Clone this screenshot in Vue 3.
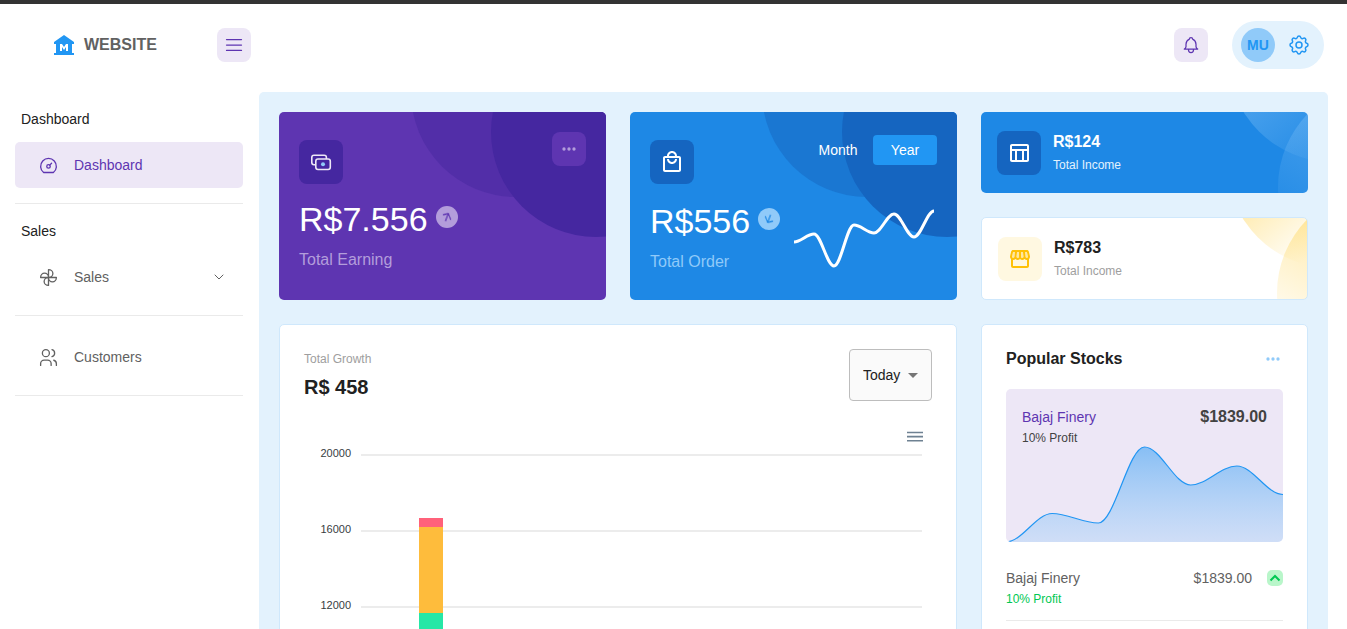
<script setup>
import { ref } from 'vue'

const period = ref('Year')
const range = ref('Today')

// Smooth line through the points with horizontal tangents at each one.
function smooth(points) {
  return points.reduce((d, [x, y], i) => {
    if (i === 0) return `M${x} ${y}`
    const [px, py] = points[i - 1]
    const k = (x - px) * 0.35
    return `${d} C${px + k} ${py} ${x - k} ${y} ${x} ${y}`
  }, '')
}

const orderLine = smooth([33, 25, 57, 16, 24, 5, 28, 2].map((y, i) => [i * 20, y]))
const stockLine = smooth([0, 15, 10, 50, 30, 40, 25].map((v, i) => [i * 46, 96 - v * 1.9]))
const stockArea = `${stockLine} V96 H0 Z`

const ticks = ['20000', '16000', '12000']
const segments = [
  { color: '#ff617a', height: 9 },
  { color: '#febc3c', height: 86 },
  { color: '#26e7a6', height: 220 },
]
</script>

<template>
  <div class="shell">
    <header class="topbar">
      <div class="brand-area">
        <a class="brand" href="#">
          <svg width="24" height="24" viewBox="0 0 24 24" fill="#2196f3" aria-hidden="true">
            <path d="M22 11V9L12 2 2 9v2h2v9H2v2h20v-2h-2v-9h2zm-6 7h-2v-4l-2 3-2-3v4H8v-7h2l2 3 2-3h2v7z" />
          </svg>
          <span>WEBSITE</span>
        </a>
        <button class="icon-btn" aria-label="Toggle menu">
          <svg class="line" width="20" height="20" viewBox="0 0 24 24"><path d="M3 5.500h18M3 12h18M3 18.500h18" /></svg>
        </button>
      </div>
      <div class="tools">
        <button class="icon-btn" aria-label="Notifications">
          <svg class="line" width="20" height="20" viewBox="0 0 24 24">
            <path d="M10 5a2 2 0 0 1 4 0a7 7 0 0 1 4 6v3a4 4 0 0 0 2 3h-16a4 4 0 0 0 2-3v-3a7 7 0 0 1 4-6M9 17v1a3 3 0 0 0 6 0v-1" />
          </svg>
        </button>
        <button class="profile" aria-label="Account settings">
          <span class="avatar">MU</span>
          <svg class="line" width="24" height="24" viewBox="0 0 24 24">
            <path d="M10.325 4.317c.426-1.756 2.924-1.756 3.35 0a1.724 1.724 0 0 0 2.573 1.066c1.543-.94 3.31.826 2.37 2.37a1.724 1.724 0 0 0 1.065 2.572c1.756.426 1.756 2.924 0 3.35a1.724 1.724 0 0 0-1.066 2.573c.94 1.543-.826 3.31-2.37 2.37a1.724 1.724 0 0 0-2.572 1.065c-.426 1.756-2.924 1.756-3.35 0a1.724 1.724 0 0 0-2.573-1.066c-1.543.94-3.31-.826-2.37-2.37a1.724 1.724 0 0 0-1.065-2.572c-1.756-.426-1.756-2.924 0-3.35a1.724 1.724 0 0 0 1.066-2.573c-.94-1.543.826-3.31 2.37-2.37c1 .608 2.296.07 2.572-1.065z" />
            <circle cx="12" cy="12" r="3" />
          </svg>
        </button>
      </div>
    </header>

    <div class="body">
      <nav class="sidebar">
        <section class="group">
          <h2 class="caption">Dashboard</h2>
          <a class="item active" href="#">
            <svg class="line" width="21" height="21" viewBox="0 0 24 24">
              <circle cx="12" cy="13" r="2" /><path d="M13.450 11.550 15.500 9.500M6.400 20a9 9 0 1 1 11.200 0z" />
            </svg>
            <span>Dashboard</span>
          </a>
        </section>
        <section class="group">
          <h2 class="caption">Sales</h2>
          <a class="item" href="#">
            <svg class="line" width="21" height="21" viewBox="0 0 24 24">
              <path d="M12 12c2.760 0 5-2.010 5-4.500S14.760 3 12 3v9zM12 12c0 2.760 2.010 5 4.500 5s4.500-2.240 4.500-5h-9zM12 12c-2.760 0-5 2.010-5 4.500S9.240 21 12 21v-9zM12 12c0-2.760-2.010-5-4.500-5S3 9.240 3 12h9z" />
            </svg>
            <span>Sales</span>
            <svg class="line chevron" width="16" height="16" viewBox="0 0 24 24"><path d="M6 9l6 6l6-6" /></svg>
          </a>
        </section>
        <section class="group untitled">
          <a class="item" href="#">
            <svg class="line" width="21" height="21" viewBox="0 0 24 24">
              <circle cx="9" cy="7" r="4" />
              <path d="M3 21v-2a4 4 0 0 1 4-4h4a4 4 0 0 1 4 4v2M16 3.130a4 4 0 0 1 0 7.750M21 21v-2a4 4 0 0 0-3-3.850" />
            </svg>
            <span>Customers</span>
          </a>
        </section>
      </nav>

      <main class="board">
        <article class="card stat purple">
          <div class="stat-top">
            <span class="tile">
              <svg width="22" height="22" viewBox="0 0 22 22" fill="none" stroke="#ede7f6" stroke-width="1.600" stroke-linejoin="round">
                <path d="M5 13.800H4a2.200 2.200 0 0 1-2.200-2.200V6.500a2.200 2.200 0 0 1 2.200-2.200h10.200a2.200 2.200 0 0 1 2.200 2.200V8" />
                <rect x="5.800" y="8" width="14.500" height="10.500" rx="2.200" />
                <circle cx="13" cy="13.200" r="2" fill="#90caf9" stroke="none" />
              </svg>
            </span>
            <button class="icon-btn more" aria-label="More options">
              <svg width="20" height="20" viewBox="0 0 24 24" fill="currentColor"><circle cx="6" cy="12" r="2" /><circle cx="12" cy="12" r="2" /><circle cx="18" cy="12" r="2" /></svg>
            </button>
          </div>
          <div class="amount">
            <strong>R$7.556</strong>
            <span class="trend">
              <svg width="16" height="16" viewBox="0 0 24 24" fill="currentColor"><path d="M4 12l1.410 1.410L11 7.830V20h2V7.830l5.580 5.590L20 12l-8-8-8 8z" /></svg>
            </span>
          </div>
          <p class="label">Total Earning</p>
        </article>

        <article class="card stat blue">
          <div class="stat-top">
            <span class="tile">
              <svg width="24" height="24" viewBox="0 0 24 24" fill="#fff">
                <path d="M19 6h-2c0-2.760-2.240-5-5-5S7 3.240 7 6H5c-1.100 0-1.990.9-1.990 2L3 20c0 1.100.9 2 2 2h14c1.100 0 2-.9 2-2V8c0-1.100-.9-2-2-2zm-7-3c1.660 0 3 1.340 3 3H9c0-1.660 1.340-3 3-3zm7 17H5V8h14v12zm-7-8c-1.660 0-3-1.340-3-3H7c0 2.760 2.240 5 5 5s5-2.240 5-5h-2c0 1.660-1.340 3-3 3z" />
              </svg>
            </span>
            <div class="switch">
              <button v-for="p in ['Month', 'Year']" :key="p" :class="{ on: period === p }" @click="period = p">{{ p }}</button>
            </div>
          </div>
          <div class="order-row">
            <div>
              <div class="amount">
                <strong>R$556</strong>
                <span class="trend">
                  <svg width="16" height="16" viewBox="0 0 24 24" fill="currentColor"><path d="M20 12l-1.410-1.410L13 16.170V4h-2v12.170l-5.580-5.590L4 12l8 8 8-8z" /></svg>
                </span>
              </div>
              <p class="label">Total Order</p>
            </div>
            <svg class="spark" width="140" height="60" viewBox="0 0 140 60"><path :d="orderLine" /></svg>
          </div>
        </article>

        <div class="stack">
          <article class="card income dark">
            <span class="tile">
              <svg width="24" height="24" viewBox="0 0 24 24" fill="#fff">
                <path d="M20 3H5c-1.100 0-2 .9-2 2v14c0 1.100.9 2 2 2h15c1.100 0 2-.9 2-2V5c0-1.100-.9-2-2-2zm0 2v3H5V5h15zm-5 14h-5v-9h5v9zM5 10h3v9H5v-9zm12 9v-9h3v9h-3z" />
              </svg>
            </span>
            <div><h3>R$124</h3><p>Total Income</p></div>
          </article>
          <article class="card income light">
            <span class="tile">
              <svg width="24" height="24" viewBox="0 0 24 24" fill="#ffc107">
                <path opacity=".3" d="M4.040 9.360c-.1.420-.01.850.26 1.170.13.180.44.470.93.470.61 0 1.130-.49 1.210-1.140L7.020 5H5.050zM8.490 9.520c-.04.39.08.78.33 1.070.24.260.55.410.89.410.74 0 1.290-.59 1.290-1.310V5H9.040zM13 5v4.690c0 .72.55 1.310 1.220 1.310.41 0 .73-.15.95-.41.26-.29.38-.68.33-1.070L14.960 5zM18.910 4.990L16.980 5l.58 4.860c.07.650.6 1.140 1.210 1.140.5 0 .8-.29.94-.47.26-.33.35-.75.25-1.170z" />
                <path d="M21.9 8.890l-1.050-4.370c-.22-.9-1-1.520-1.910-1.520H5.050c-.9 0-1.690.63-1.900 1.520L2.100 8.890c-.24 1.020-.02 2.060.62 2.880.08.110.19.190.28.290V19c0 1.100.9 2 2 2h14c1.100 0 2-.9 2-2v-6.940c.09-.09.2-.18.28-.28.64-.82.87-1.870.62-2.890zm-2.990-3.900l1.050 4.370c.1.420.01.840-.25 1.170-.14.180-.44.470-.94.470-.61 0-1.140-.49-1.210-1.140L16.980 5l1.930-.01zM13 5h1.960l.54 4.520c.05.39-.07.78-.33 1.070-.22.260-.54.410-.95.410-.67 0-1.220-.59-1.220-1.310V5zM8.490 9.520L9.040 5H11v4.690c0 .72-.55 1.310-1.290 1.310-.34 0-.65-.15-.89-.41-.25-.29-.37-.68-.33-1.070zm-4.450-.16L5.050 5h1.970l-.58 4.860c-.08.650-.6 1.140-1.210 1.140-.49 0-.8-.29-.93-.47-.27-.32-.36-.75-.26-1.170zM5 19v-6.030c.08.010.15.030.23.030.87 0 1.660-.36 2.240-.95.6.6 1.400.95 2.310.95.87 0 1.650-.36 2.230-.93.59.57 1.390.93 2.290.93.84 0 1.640-.35 2.240-.95.58.59 1.370.95 2.240.95.08 0 .15-.02.23-.03V19H5z" />
              </svg>
            </span>
            <div><h3>R$783</h3><p>Total Income</p></div>
          </article>
        </div>

        <article class="card panel growth">
          <div class="growth-head">
            <div>
              <p class="muted">Total Growth</p>
              <h2>R$ 458</h2>
            </div>
            <div class="picker">
              <select v-model="range" aria-label="Period">
                <option>Today</option>
              </select>
              <svg width="10" height="5" viewBox="0 0 10 5" fill="#757575" aria-hidden="true"><path d="M0 0l5 5 5-5z" /></svg>
            </div>
          </div>
          <div class="chart-tools">
            <button aria-label="Chart menu">
              <svg width="24" height="24" viewBox="0 0 24 24" fill="none" stroke="#6e8192" stroke-width="1.600"><path d="M4 7.500h16M4 11.600h16M4 15.700h16" /></svg>
            </button>
          </div>
          <div class="chart">
            <div class="axis"><span v-for="t in ticks" :key="t">{{ t }}</span></div>
            <div class="plot">
              <div v-for="t in ticks" :key="t" class="rule"></div>
              <div class="bars">
                <div class="bar">
                  <div v-for="s in segments" :key="s.color" :style="{ background: s.color, height: s.height + 'px' }"></div>
                </div>
              </div>
            </div>
          </div>
        </article>

        <article class="card panel stocks">
          <div class="stocks-head">
            <h2>Popular Stocks</h2>
            <button aria-label="Stock options">
              <svg width="20" height="20" viewBox="0 0 24 24" fill="#90caf9"><circle cx="6" cy="12" r="2" /><circle cx="12" cy="12" r="2" /><circle cx="18" cy="12" r="2" /></svg>
            </button>
          </div>
          <div class="feature">
            <div class="feature-text">
              <div><h3>Bajaj Finery</h3><p>10% Profit</p></div>
              <strong>$1839.00</strong>
            </div>
            <svg class="area" viewBox="0 0 276 96" preserveAspectRatio="none">
              <defs>
                <linearGradient id="area-fill" x1="0" y1="0" x2="0" y2="1">
                  <stop offset="0" stop-color="#2196f3" stop-opacity=".5" />
                  <stop offset="1" stop-color="#90caf9" stop-opacity=".32" />
                </linearGradient>
              </defs>
              <path :d="stockArea" fill="url(#area-fill)" />
              <path :d="stockLine" fill="none" stroke="#2196f3" stroke-width="1.200" />
            </svg>
          </div>
          <div class="stock-row">
            <div><h3>Bajaj Finery</h3><p>10% Profit</p></div>
            <span class="price">$1839.00</span>
            <span class="up">
              <svg width="16" height="16" viewBox="0 0 16 16" fill="none" stroke="#00c853" stroke-width="2"><path d="M3.500 10.500l4.500-4.500 4.500 4.500" /></svg>
            </span>
          </div>
        </article>
      </main>
    </div>
  </div>
</template>

<style>
body {
  margin: 0;
  background: #fff;
}
</style>

<style scoped>
.shell {
  height: 100vh;
  overflow: hidden;
  box-sizing: border-box;
  border-top: 4px solid #333;
  font-family: 'Liberation Sans', Arial, sans-serif;
  font-size: 14px;
  line-height: 20px;
  color: #212121;
}
.shell *,
.shell *::before,
.shell *::after {
  box-sizing: border-box;
}
h2, h3, p {
  margin: 0;
}
svg {
  display: block;
  flex: none;
}
button {
  border: 0;
  padding: 0;
  background: none;
  font: inherit;
  color: inherit;
  cursor: pointer;
}
a {
  color: inherit;
  text-decoration: none;
}
.line {
  fill: none;
  stroke: currentColor;
  stroke-width: 1.5;
  stroke-linecap: round;
  stroke-linejoin: round;
}

.topbar {
  display: flex;
  justify-content: space-between;
  padding: 17px 23px 23px 52px;
}
.brand-area {
  display: flex;
  align-items: center;
  justify-content: space-between;
  width: 199px;
}
.brand {
  display: flex;
  align-items: center;
  gap: 8px;
  font-size: 16px;
  font-weight: 700;
  color: #616161;
}
.icon-btn {
  display: grid;
  place-items: center;
  width: 34px;
  height: 34px;
  border-radius: 8px;
  background: #ede7f6;
  color: #5e35b1;
}
.tools {
  display: flex;
  align-items: center;
  gap: 24px;
}
.profile {
  display: flex;
  align-items: center;
  gap: 12px;
  height: 48px;
  padding: 0 13px 0 9px;
  border-radius: 24px;
  background: #e3f2fd;
  color: #2196f3;
}
.avatar {
  display: grid;
  place-items: center;
  width: 34px;
  height: 34px;
  border-radius: 50%;
  background: #90caf9;
  font-weight: 700;
}

.body {
  display: flex;
  align-items: flex-start;
}
.sidebar {
  flex: none;
  width: 259px;
  padding: 17px 16px 0 15px;
}
.group {
  padding-bottom: 15px;
  margin-bottom: 17px;
  border-bottom: 1px solid #eaeaea;
}
.untitled {
  padding-top: 1px;
}
.caption {
  margin: 0 6px 13px;
  font-size: 14px;
  font-weight: 400;
}
.item {
  display: flex;
  align-items: center;
  gap: 15px;
  height: 46px;
  padding: 0 16px 0 23px;
  border-radius: 5px;
  color: #616161;
}
.active {
  background: #ede7f6;
  color: #5e35b1;
}
.chevron {
  margin-left: auto;
}

.board {
  flex: 1;
  min-width: 0;
  margin-right: 19px;
  padding: 20px;
  border-radius: 5px 5px 0 0;
  background: #e3f2fd;
  display: grid;
  grid-template-columns: repeat(3, minmax(0, 1fr));
  gap: 24px;
}
.card {
  position: relative;
  overflow: hidden;
  border-radius: 5px;
}
.tile {
  display: grid;
  place-items: center;
  flex: none;
  width: 44px;
  height: 44px;
  border-radius: 8px;
}

.stat {
  padding: 20px 20px 30px;
  color: #fff;
}
.stat::before,
.stat::after {
  content: '';
  position: absolute;
  width: 210px;
  height: 210px;
  border-radius: 50%;
}
.stat::before {
  top: -125px;
  right: -15px;
  opacity: 0.5;
}
.stat::after {
  top: -85px;
  right: -95px;
}
.stat > * {
  position: relative;
  z-index: 1;
}
.purple {
  background: #5e35b1;
}
.purple::before,
.purple::after,
.purple .tile {
  background: #4527a0;
}
.blue {
  background: #1e88e5;
  padding-bottom: 28px;
}
.blue::before,
.blue::after,
.blue .tile {
  background: #1565c0;
}
.stat-top {
  display: flex;
  justify-content: space-between;
  align-items: flex-start;
}
.stat .tile {
  margin-top: 8px;
}
.more {
  background: #5e35b1;
  color: #b39ddb;
}
.amount {
  display: flex;
  align-items: flex-start;
  gap: 8px;
  margin-top: 15px;
}
.amount strong {
  font-size: 34px;
  font-weight: 400;
  line-height: 40px;
}
.trend {
  display: grid;
  place-items: center;
  width: 22px;
  height: 22px;
  margin-top: 7px;
  border-radius: 50%;
}
.trend svg {
  transform: rotate3d(1, 1, 1, 45deg);
}
.label {
  margin-top: 11px;
  font-size: 16px;
}
.purple .trend {
  background: #b39ddb;
  color: #5e35b1;
}
.purple .label {
  color: #b39ddb;
}
.blue .trend {
  background: #90caf9;
  color: #1e88e5;
}
.blue .label {
  color: #90caf9;
}
.switch {
  display: flex;
  gap: 3px;
  margin-top: 3px;
}
.switch button {
  width: 64px;
  height: 30px;
  border-radius: 4px;
}
.switch .on {
  background: #2196f3;
}
.order-row {
  display: flex;
  justify-content: space-between;
  margin-top: 17px;
  padding-right: 3px;
}
.order-row .amount {
  margin-top: 0;
}
.spark {
  margin-top: 8px;
}
.spark path {
  fill: none;
  stroke: #fff;
  stroke-width: 3;
}

.stack {
  display: flex;
  flex-direction: column;
  gap: 24px;
}
.income {
  flex: 1 1 auto;
  display: flex;
  align-items: center;
  gap: 12px;
  padding: 16px;
}
.income::before,
.income::after {
  content: '';
  position: absolute;
  width: 210px;
  height: 210px;
  border-radius: 50%;
}
.income::before {
  top: -160px;
  right: -130px;
}
.income::after {
  top: -30px;
  right: -180px;
}
.income h3 {
  font-size: 16px;
  line-height: 24px;
}
.income p {
  font-size: 12px;
  line-height: 22px;
}
.dark {
  background: #1e88e5;
  color: #fff;
}
.dark p {
  color: #e3f2fd;
}
.dark .tile {
  background: #1565c0;
}
.dark::before {
  background: linear-gradient(140.9deg, #90caf9 -14%, rgba(144, 202, 249, 0) 78%);
}
.dark::after {
  background: linear-gradient(210deg, #90caf9 -51%, rgba(144, 202, 249, 0) 83%);
}
.light {
  background: #fff;
  border: 1px solid #cfe8fc;
}
.light p,
.muted {
  color: #9e9e9e;
}
.light .tile {
  background: #fff8e1;
}
.light::before {
  background: linear-gradient(140.9deg, #ffc107 -14%, rgba(255, 193, 7, 0) 70%);
}
.light::after {
  background: linear-gradient(210deg, #ffc107 -51%, rgba(255, 193, 7, 0) 83%);
}

.panel {
  min-height: 480px;
  padding: 24px;
  border: 1px solid #cfe8fc;
  background: #fff;
}
.growth {
  grid-column: span 2;
}
.growth-head {
  display: flex;
  justify-content: space-between;
}
.muted {
  font-size: 12px;
}
.growth h2 {
  margin-top: 6px;
  font-size: 20px;
  line-height: 24px;
}
.picker {
  position: relative;
}
.picker select {
  display: block;
  width: 83px;
  height: 52px;
  padding: 0 28px 0 13px;
  appearance: none;
  border: 1px solid #bdbdbd;
  border-radius: 4px;
  background: #fafafa;
  font: inherit;
  color: #212121;
}
.picker svg {
  position: absolute;
  right: 14px;
  top: 24px;
  pointer-events: none;
}
.chart-tools {
  display: flex;
  justify-content: flex-end;
  padding: 24px 5px 0 0;
}
.chart {
  display: flex;
  gap: 10px;
  padding: 5px 10px 0 15px;
}
.axis span {
  display: block;
  height: 76px;
  width: 32px;
  font-size: 11px;
  line-height: 16px;
  margin-top: -9px;
  margin-bottom: 9px;
  text-align: right;
  color: #373d3f;
}
.plot {
  position: relative;
  flex: 1;
}
.rule {
  height: 76px;
  border-top: 2px solid #ececec;
}
.bars {
  position: absolute;
  inset: 64px 0 auto;
  display: grid;
  grid-template-columns: repeat(12, 1fr);
}
.bar {
  grid-column: 2;
  justify-self: center;
  width: 50%;
}

.stocks-head {
  display: flex;
  justify-content: space-between;
  align-items: center;
}
.stocks-head h2 {
  font-size: 16px;
}
.feature {
  margin-top: 20px;
  border-radius: 5px;
  overflow: hidden;
  background: #ede7f6;
}
.feature-text {
  display: flex;
  justify-content: space-between;
  padding: 18px 16px 0;
}
.feature h3,
.stock-row h3 {
  font-size: 14px;
  font-weight: 400;
}
.feature p,
.stock-row p {
  margin-top: 1px;
  font-size: 12px;
}
.feature h3 {
  color: #5e35b1;
}
.feature p,
.feature strong {
  color: #424242;
}
.feature strong {
  font-size: 16px;
}
.area {
  width: 100%;
  height: 96px;
  margin-top: -2px;
}
.stock-row {
  display: flex;
  align-items: flex-start;
  margin-top: 26px;
  padding-bottom: 11px;
  border-bottom: 1px solid #eaeaea;
  color: #616161;
}
.stock-row p {
  color: #00c853;
}
.price {
  margin-left: auto;
}
.up {
  margin: 2px 0 0 15px;
  border-radius: 5px;
  background: #b9f6ca;
}
</style>
